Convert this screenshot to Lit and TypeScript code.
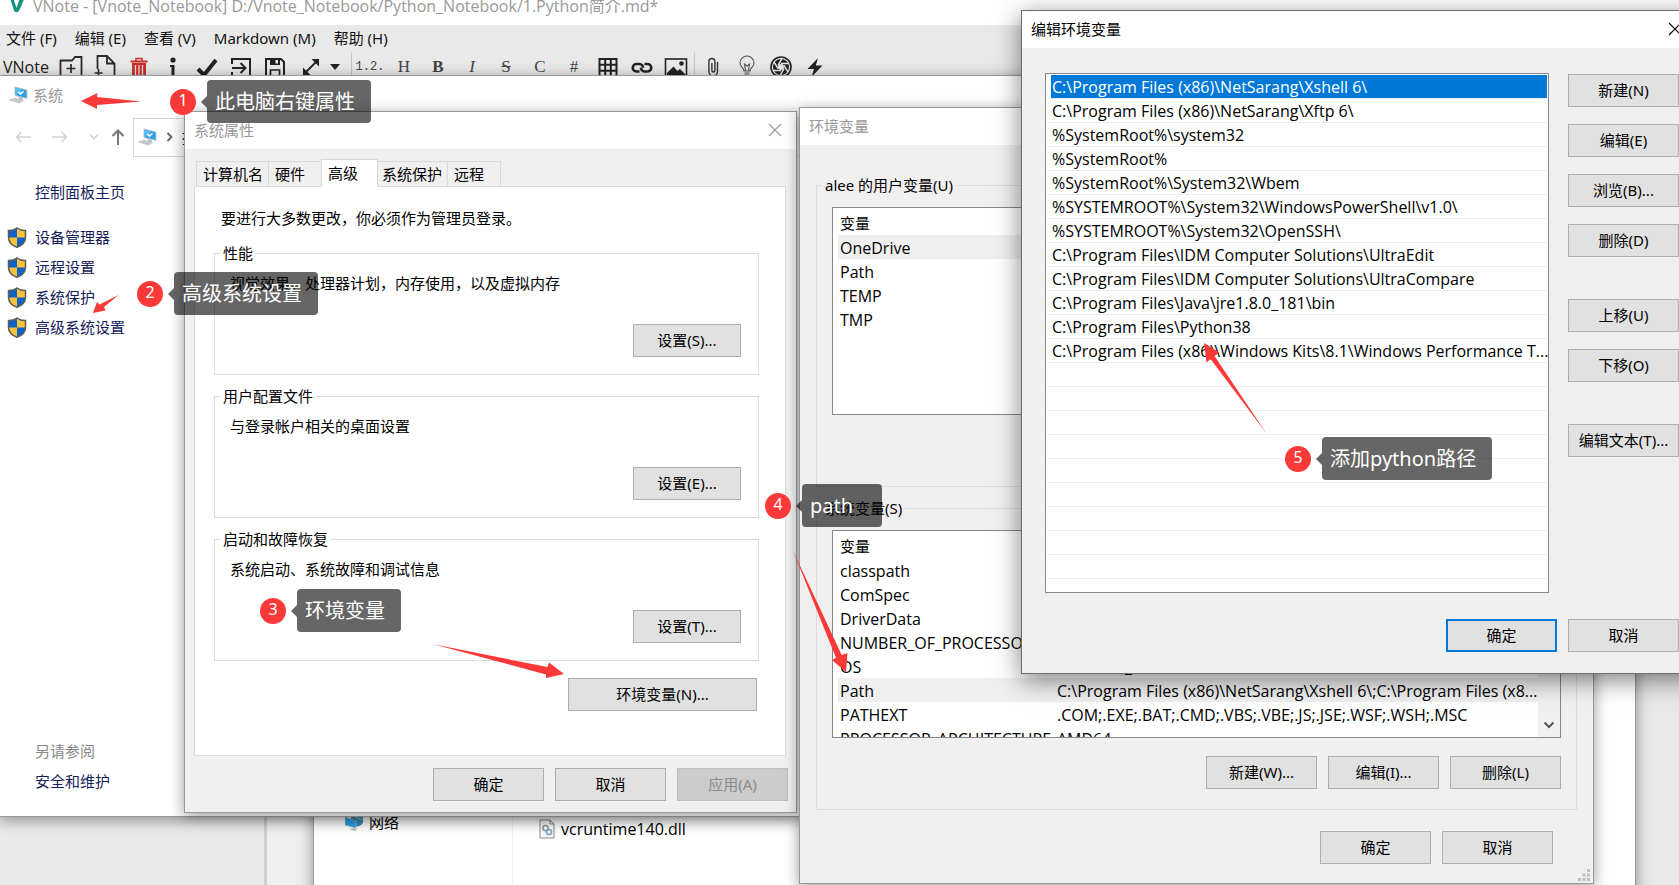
import { LitElement, html, css, svg } from "lit";
import { customElement } from "lit/decorators.js";
import { classMap } from "lit/directives/class-map.js";

const MENUS = ["文件 (F)", "编辑 (E)", "查看 (V)", "Markdown (M)", "帮助 (H)"];

const TABS = ["计算机名", "硬件", "高级", "系统保护", "远程"];

const GROUPS = [
  { title: "性能", text: "视觉效果，处理器计划，内存使用，以及虚拟内存", button: "设置(S)..." },
  { title: "用户配置文件", text: "与登录帐户相关的桌面设置", button: "设置(E)..." },
  { title: "启动和故障恢复", text: "系统启动、系统故障和调试信息", button: "设置(T)..." },
];

const USER_VARS: [string, string][] = [
  ["OneDrive", ""],
  ["Path", ""],
  ["TEMP", ""],
  ["TMP", ""],
];

const SYSTEM_VARS: [string, string][] = [
  ["classpath", ""],
  ["ComSpec", ""],
  ["DriverData", ""],
  ["NUMBER_OF_PROCESSORS", ""],
  ["OS", "Windows_NT"],
  ["Path", "C:\\Program Files (x86)\\NetSarang\\Xshell 6\\;C:\\Program Files (x8..."],
  ["PATHEXT", ".COM;.EXE;.BAT;.CMD;.VBS;.VBE;.JS;.JSE;.WSF;.WSH;.MSC"],
  ["PROCESSOR_ARCHITECTURE", "AMD64"],
];

const PATHS = [
  "C:\\Program Files (x86)\\NetSarang\\Xshell 6\\",
  "C:\\Program Files (x86)\\NetSarang\\Xftp 6\\",
  "%SystemRoot%\\system32",
  "%SystemRoot%",
  "%SystemRoot%\\System32\\Wbem",
  "%SYSTEMROOT%\\System32\\WindowsPowerShell\\v1.0\\",
  "%SYSTEMROOT%\\System32\\OpenSSH\\",
  "C:\\Program Files\\IDM Computer Solutions\\UltraEdit",
  "C:\\Program Files\\IDM Computer Solutions\\UltraCompare",
  "C:\\Program Files\\Java\\jre1.8.0_181\\bin",
  "C:\\Program Files\\Python38",
  "C:\\Program Files (x86)\\Windows Kits\\8.1\\Windows Performance T...",
];

const icon = (w: number, h: number, body: unknown) =>
  html`<svg width=${w} height=${h} viewBox="0 0 ${w} ${h}" aria-hidden="true">${body}</svg>`;

const computerIcon = icon(20, 18, svg`
  <path d="M6 1 L18 4 L18 12.500 L6 9.500Z" fill="#2b9fe8" stroke="#bfc7cd" stroke-width="1"/>
  <path d="M6.500 1.600 L12 3 L12 7 L6.500 9Z" fill="#58bdf5"/>
  <path d="M9.500 6 L11.500 8.300 L14.500 5.200" fill="none" stroke="#fff" stroke-width="1.400"/>
  <path d="M10 11 L14 12 L13.500 14 L9.500 13.500Z" fill="#b5bcc2"/>
  <path d="M0.500 14 L5 12 L14.500 14.500 L10.500 17Z" fill="#dde0e2" stroke="#aab0b4" stroke-width=".6"/>
  <path d="M3 14 L11 16 M5 13 L12.500 15" stroke="#a6abb0" stroke-width=".6"/>`);

const shieldIcon = icon(20, 21, svg`
  <path d="M10 1 C7.500 3 4.500 3.700 1.500 3.600 V10 C1.500 15 5 18.500 10 20.300 C15 18.500 18.500 15 18.500 10 V3.600 C15.500 3.700 12.500 3 10 1Z" fill="#ffc23b"/>
  <path d="M10 1 C7.500 3 4.500 3.700 1.500 3.600 V10.500 H10Z M10 10.500 H18.500 C18.300 15.200 15 18.500 10 20.300Z" fill="#0d62c8"/>
  <path d="M10 1 C7.500 3 4.500 3.700 1.500 3.600 V10 C1.500 15 5 18.500 10 20.300 C15 18.500 18.500 15 18.500 10 V3.600 C15.500 3.700 12.500 3 10 1Z" fill="none" stroke="#5c5c5c" stroke-width="1.500"/>`);

const closeIcon = icon(14, 14, svg`<path d="M1 1 L13 13 M13 1 L1 13" stroke="currentColor" stroke-width="1.100"/>`);

const TOOLS = [
  { label: "新建笔记本", icon: icon(24, 24, svg`<path d="M14 4.500 L16 2 H22.500 V22 H1.500 V5.500 H13Z" fill="none" stroke="#2b2b2b" stroke-width="1.800"/><path d="M12 9 V18 M7.500 13.500 H16.500" stroke="#2b2b2b" stroke-width="1.700"/>`) },
  { label: "新建笔记", icon: icon(24, 24, svg`<path d="M4.500 14 V1 H14 L21.500 8.500 V22 H13 M14 1 V8.500 H21.500" fill="none" stroke="#2b2b2b" stroke-width="1.800"/><path d="M5.500 14 V22 M1.500 18 H9.500" stroke="#2b2b2b" stroke-width="1.600"/>`) },
  { label: "删除", icon: icon(20, 24, svg`<path d="M3 8 H17 V22 H3Z" fill="#c9302c"/><path d="M1.500 6.500 H18.500" stroke="#c9302c" stroke-width="2"/><path d="M7 6 V3.500 H13 V6" fill="none" stroke="#c9302c" stroke-width="1.500"/><path d="M6.500 10 V21 M10 10 V21 M13.500 10 V21" stroke="#f0dede" stroke-width="1.300"/>`) },
  { label: "信息", icon: icon(12, 24, svg`<circle cx="6" cy="5" r="2.600" fill="#222"/><path d="M3 10 H7.500 V20 H9.500 V22 H2.500 V20 H4.500 V12 H3Z" fill="#222"/>`) },
  { label: "保存并退出", icon: icon(24, 24, svg`<path d="M3 14 L9 20 L21 5" fill="none" stroke="#222" stroke-width="4"/>`) },
  { label: "退出编辑", icon: icon(22, 24, svg`<path d="M2 9 V4 H20 V21 H2 V17" fill="none" stroke="#222" stroke-width="2"/><path d="M2 13 H15 M10.500 8 L15.500 13 L10.500 18" fill="none" stroke="#222" stroke-width="2"/>`) },
  { label: "保存", icon: icon(22, 24, svg`<path d="M2 4 H17 L20 7 V21.500 H2Z" fill="none" stroke="#222" stroke-width="2"/><path d="M6 4 H16 V10 H6Z" fill="#222"/><rect x="11.500" y="5" width="2.500" height="3.500" fill="#e9e9e9"/><path d="M6.500 22 V15 H15.500 V22" fill="none" stroke="#222" stroke-width="1.700"/>`) },
];

const FORMATS = [
  { cls: "seq", text: "1.2." },
  { cls: "", text: "H" },
  { cls: "bold", text: "B" },
  { cls: "italic", text: "I" },
  { cls: "strike", text: "S" },
  { cls: "", text: "C" },
  { cls: "", text: "#" },
];

const INSERTS = [
  { label: "表格", icon: icon(20, 22, svg`<path d="M1.500 3 H18.500 V20.500 H1.500Z M7.200 3 V20.500 M12.800 3 V20.500 M1.500 8.800 H18.500 M1.500 14.700 H18.500" fill="none" stroke="#222" stroke-width="2"/>`) },
  { label: "链接", icon: icon(22, 22, svg`<path d="M8.500 15.500 H5.500 A3.600 3.600 0 0 1 5.500 8 H8.500 A3.600 3.600 0 0 1 12 11.800 M13.500 8 H16.500 A3.600 3.600 0 0 1 16.500 15.500 H13.500 A3.600 3.600 0 0 1 10 11.800" fill="none" stroke="#222" stroke-width="2.600"/>`) },
  { label: "图片", icon: icon(24, 22, svg`<rect x="1.500" y="3" width="21" height="17.500" fill="none" stroke="#222" stroke-width="1.600"/><path d="M3 20 V17 L9.500 10.500 L13.500 15 L16 13 L21.500 18.500 V20Z" fill="#222"/><circle cx="17.500" cy="7.500" r="2.300" fill="#222"/>`) },
];

const EXTRAS = [
  { label: "附件", icon: icon(14, 22, svg`<path d="M11.500 6 V15.500 A4.300 4.300 0 0 1 2.900 15.500 V5.500 A3 3 0 0 1 8.900 5.500 V14.500 A1.500 1.500 0 0 1 5.900 14.500 V7" fill="none" stroke="#333" stroke-width="1.400"/>`) },
  { label: "提示", icon: icon(18, 24, svg`<path d="M6 16 C6 12.500 2 12 2 8 A7 7 0 0 1 16 8 C16 12 12 12.500 12 16Z M6.500 18 H11.500 M6.500 20 H11.500 M8 22 H10 M7.500 15.500 L6.500 9 L9 11 L11.500 9 L10.500 15.500" fill="none" stroke="#555" stroke-width="1.100"/>`) },
  { label: "截图", icon: icon(24, 24, svg`<circle cx="12" cy="12" r="10" fill="none" stroke="#222" stroke-width="1.600"/><circle cx="12" cy="12" r="5.500" fill="none" stroke="#222" stroke-width="5"/><path d="M12 8.500 L20 8.500 M15 10.300 L19 17.200 M15 13.700 L11 20.600 M12 15.500 L4 15.500 M9 13.700 L5 6.800 M9 10.300 L13 3.400" stroke="#e9e9e9" stroke-width="1.500"/>`) },
  { label: "快捷", icon: icon(18, 24, svg`<path d="M12 3 L1.500 14 H8 L5.500 22 L16.500 10.500 H9.800Z" fill="#222"/>`) },
];

@customElement("app-root")
export class AppRoot extends LitElement {
  static styles = css`
    :host {
      display: block;
      position: relative;
      height: 100vh;
      overflow: hidden;
      background: #e9e9e9;
      color: #000;
      font: 15px/20px "Noto Sans", "Noto Sans CJK SC", sans-serif;
    }
    * { box-sizing: border-box; }
    p, ul { margin: 0; padding: 0; }
    ul { list-style: none; }
    svg { display: block; flex: none; }
    a { text-decoration: none; color: #151c5a; }
    button { font: inherit; color: inherit; padding: 0; border: 0; background: none; white-space: nowrap; }
    .latin { font-family: "Open Sans", "Noto Sans CJK SC", sans-serif; font-size: 16px; }

    /* editor window at the back */
    .editor { height: 100%; display: flex; flex-direction: column; }
    .editor-title { height: 25px; background: #fff; color: #999; display: flex; gap: 8px; padding-left: 9px; align-items: flex-start; line-height: 13px; }
    .menubar { display: flex; gap: 18px; padding: 3px 6px; color: #111; }
    .toolbar { display: flex; align-items: center; height: 32px; color: #222; }
    .toolbar-name { width: 54px; padding-left: 3px; }
    .tool { width: 34px; height: 30px; display: flex; align-items: center; justify-content: center; font-family: "Liberation Serif", serif; font-size: 17px; color: #444; }
    .tool.wide { width: 58px; gap: 10px; }
    .tool.seq { font-family: "Liberation Mono", monospace; font-size: 12px; }
    .bold { font-weight: bold; }
    .italic { font-style: italic; }
    .strike { text-decoration: line-through; }
    .rule { width: 1px; height: 30px; margin: 0 1px; background: #c8c8c8; }
    .editor-body { flex: 1; display: flex; }
    .tree { width: 267px; border-right: 3px solid #cfcfcf; }
    .page { width: 48px; background: #efefef; }

    /* windows */
    .window { position: absolute; display: flex; flex-direction: column; border: 1px solid #999; background: #f0f0f0; box-shadow: 0 3px 14px rgba(0, 0, 0, .4); }
    .titlebar { flex: none; height: 37px; background: #fff; color: #999; display: flex; align-items: center; justify-content: space-between; padding: 0 14px 2px 9px; }
    .push { width: 111px; height: 33px; padding-bottom: 2px; border: 1px solid #adadad; background: #e1e1e1; }
    .push.setting { width: 108px; }
    .push.primary { border: 2px solid #0078d7; }
    .push.long { width: 189px; }
    .push:disabled { background: #ccc; border-color: #bfbfbf; color: #8a8a8a; }
    .actions { display: flex; justify-content: flex-end; gap: 11px; }
    fieldset { margin: 0; min-width: 0; border: 1px solid #dcdcdc; padding: 0 15px; }
    legend { margin-left: -10px; padding: 0 3px; }

    .explorer { left: 313px; top: 600px; width: 1323px; height: 340px; background: #fff; flex-direction: row; }
    .places { width: 199px; padding: 211px 0 0 31px; border-right: 1px solid #f0f0f0; }
    .files { padding: 218px 0 0 26px; }
    .entry { display: flex; gap: 6px; align-items: center; }

    .system { left: -1px; top: 75px; width: 1300px; height: 742px; background: #fff; }
    .system-title { display: flex; align-items: center; gap: 4px; height: 37px; padding-left: 9px; color: #999; }
    .navbar { display: flex; align-items: center; height: 48px; padding-left: 15px; color: #d3d3d3; }
    .nav { display: flex; }
    .nav.arrow { width: 37px; }
    .nav.more { width: 18px; }
    .nav.up { width: 26px; padding-left: 4px; color: #777; }
    .address { flex: 1; display: flex; align-items: center; gap: 8px; height: 39px; padding-left: 4px; border: 1px solid #d5d5d5; color: #000; }
    .side { flex: 1; display: flex; flex-direction: column; padding: 16px 0 20px 7px; }
    .side a, .side p { line-height: 30px; padding-left: 28px; }
    .side .task { display: flex; align-items: center; gap: 8px; padding-left: 0; }
    .tasks { padding-top: 15px; }
    .also { margin-top: auto; color: #888; display: flex; flex-direction: column; }

    .props { left: 184px; top: 111px; width: 613px; height: 702px; }
    .props-body { padding: 10px 8px 0 9px; display: flex; flex-direction: column; }
    .tabs { display: flex; align-items: flex-end; height: 28px; padding-left: 2px; }
    .tab { height: 26px; margin-right: -1px; padding: 0 16px 0 6px; border: 1px solid #d9d9d9; background: #f0f0f0; line-height: 24px; }
    .tab.full { padding-right: 5px; }
    .tab.active { z-index: 1; height: 28px; margin-right: -3px; padding-right: 19px; background: #fff; border-bottom-color: #fff; }
    .panel { margin: -1px 2px 12px 0; height: 570px; padding: 21px 26px 0 19px; background: #fff; border: 1px solid #dcdcdc; display: flex; flex-direction: column; gap: 11px; }
    .notice { padding: 0 0 4px 7px; }
    .panel fieldset { height: 132px; }
    .panel fieldset p { padding: 10px 0 31px; }
    .panel .actions { padding: 0 2px; }
    .after { margin-top: 6px; }

    .env { left: 799px; top: 107px; width: 795px; height: 777px; }
    .env-body { flex: 1; padding: 30px 16px 0; display: flex; flex-direction: column; gap: 11px; }
    .env-body fieldset { height: 312px; }
    .varlist { height: 208px; margin: 12px 0 18px; padding-left: 5px; border: 1px solid #828790; background: #fff; display: flex; overflow: hidden; }
    table { flex: 1; width: 0; align-self: flex-start; table-layout: fixed; border-collapse: collapse; }
    th, td { height: 24px; padding: 2px 2px 0; text-align: left; font-weight: 400; white-space: nowrap; }
    th { height: 27px; }
    .name { width: 217px; }
    .picked { background: #f0f0f0; }
    .scroll { width: 22px; background: #f0f0f0; display: flex; align-items: flex-end; justify-content: center; padding-bottom: 8px; color: #555; }
    .env-actions { padding: 10px 24px 0; }
    .grip { position: absolute; right: 3px; bottom: 2px; }

    .edit { left: 1021px; top: 10px; width: 682px; height: 664px; border-color: #6e6e6e; box-shadow: 0 6px 24px rgba(0, 0, 0, .5); }
    .edit .titlebar { color: #000; padding: 0 20px 2px 9px; }
    .edit-body { padding: 25px 23px 0; display: flex; flex-direction: column; gap: 26px; }
    .edit-main { display: flex; gap: 19px; }
    .paths { flex: 1; min-width: 0; height: 520px; padding: 1px; border: 1px solid #828790; background: repeating-linear-gradient(#fff 0 23px, #ededed 23px 24px) content-box, #fff; }
    .paths li { height: 24px; margin-left: 4px; padding-left: 1px; line-height: 25px; white-space: nowrap; border-bottom: 1px solid #ededed; }
    .paths .selected { background: #0078d7; color: #fff; }
    .column { display: flex; flex-direction: column; gap: 17px; padding-top: 1px; }
    .apart { margin-top: 25px; }

    /* step annotations lying over the windows */
    .arrows { position: absolute; left: 0; top: 0; pointer-events: none; }
    .step { position: absolute; display: flex; align-items: center; gap: 5px; height: 43px; color: #fff; }
    .badge { width: 26px; height: 26px; border-radius: 50%; background: #fb3938; text-align: center; font-size: 16px; line-height: 23px; }
    .tip { display: flex; align-items: center; }
    .tip::before { content: ""; border: solid transparent; border-width: 6px 6px 6px 0; border-right-color: rgba(0, 0, 0, .6); }
    .tip-text { height: 43px; min-width: 80px; padding: 0 16px 0 8px; border-radius: 4px; background: rgba(0, 0, 0, .6); font-size: 20px; line-height: 43px; white-space: nowrap; }
    .s1 { left: 170px; top: 80px; }
    .s2 { left: 137px; top: 272px; }
    .s3 { left: 260px; top: 589px; }
    .s4 { left: 765px; top: 484px; }
    .s5 { left: 1285px; top: 437px; }
  `;

  private toolButtons(items: { label: string; icon: unknown }[]) {
    return items.map((t) => html`<button class="tool" aria-label=${t.label}>${t.icon}</button>`);
  }

  private editor() {
    return html`
      <section class="editor">
        <div class="editor-title latin">
          ${icon(16, 14, svg`<path d="M1 -2 C3 -3 5 -1 5.500 2 L7.500 8 L11 -2 L15.500 -2 L11 9 C9.500 13 5.500 13.500 4.500 9Z" fill="#17917f"/>`)}
          <span>VNote - [Vnote_Notebook] D:/Vnote_Notebook/Python_Notebook/1.Python简介.md*</span>
        </div>
        <nav class="menubar">${MENUS.map((m) => html`<button>${m}</button>`)}</nav>
        <div class="toolbar">
          <span class="toolbar-name latin">VNote</span>
          ${this.toolButtons(TOOLS)}
          <button class="tool wide" aria-label="展开">
            ${icon(18, 18, svg`<path d="M3 15 L15 3" stroke="#222" stroke-width="1.800"/><path d="M9.500 1 H17 V8.500Z M1 9.500 V17 H8.500Z" fill="#222"/>`)}
            ${icon(10, 6, svg`<path d="M0 0 H10 L5 6Z" fill="#222"/>`)}
          </button>
          <span class="rule"></span>
          ${FORMATS.map((f) => html`<button class="tool ${f.cls}">${f.text}</button>`)}
          ${this.toolButtons(INSERTS)}
          <span class="rule"></span>
          ${this.toolButtons(EXTRAS)}
        </div>
        <div class="editor-body"><div class="tree"></div><div class="page"></div></div>
      </section>`;
  }

  private explorer() {
    return html`
      <section class="window explorer">
        <div class="places">
          <div class="entry">
            ${icon(18, 20, svg`<circle cx="12" cy="8" r="6.500" fill="#3a8fb5"/><path d="M8 4 C12 5 14 8 18 7" stroke="#a5d6e8" fill="none"/><path d="M0 5 L11 9 V16 L0 13Z" fill="#2aa4ee" stroke="#9fb4bf" stroke-width=".8"/><path d="M4 17 L9 19 L13 17.500 L8 16Z" fill="#bcc2c6"/>`)}
            <span>网络</span>
          </div>
        </div>
        <div class="files">
          <div class="entry">
            ${icon(16, 20, svg`<path d="M1 1 H11 L15 5 V19 H1Z" fill="#fafafa" stroke="#888"/><path d="M11 1 V5 H15" fill="none" stroke="#888"/><circle cx="6.500" cy="9" r="2.600" fill="none" stroke="#8b9298" stroke-width="1.500"/><circle cx="10" cy="13" r="2.600" fill="none" stroke="#6da4cc" stroke-width="1.500"/>`)}
            <span class="latin">vcruntime140.dll</span>
          </div>
        </div>
      </section>`;
  }

  private system() {
    return html`
      <section class="window system">
        <div class="system-title">${computerIcon}<span>系统</span></div>
        <div class="navbar">
          <button class="nav arrow" aria-label="后退">${icon(16, 12, svg`<path d="M16 6 H1.500 M6.500 1 L1.500 6 L6.500 11" fill="none" stroke="currentColor" stroke-width="1.600"/>`)}</button>
          <button class="nav arrow" aria-label="前进">${icon(16, 12, svg`<path d="M0 6 H14.500 M9.500 1 L14.500 6 L9.500 11" fill="none" stroke="currentColor" stroke-width="1.600"/>`)}</button>
          <button class="nav more" aria-label="最近">${icon(10, 8, svg`<path d="M1 1.500 L5 5.500 L9 1.500" fill="none" stroke="currentColor" stroke-width="1.600"/>`)}</button>
          <button class="nav up" aria-label="上移">${icon(14, 16, svg`<path d="M7 16 V1.500 M1.500 7 L7 1.500 L12.500 7" fill="none" stroke="currentColor" stroke-width="2"/>`)}</button>
          <div class="address">
            ${computerIcon}
            ${icon(8, 10, svg`<path d="M1.500 1 L5.500 5 L1.500 9" fill="none" stroke="#666" stroke-width="1.800"/>`)}
            <span>控制面板</span>
          </div>
        </div>
        <nav class="side">
          <a href="#">控制面板主页</a>
          <div class="tasks">
            ${["设备管理器", "远程设置", "系统保护", "高级系统设置"].map(
              (t) => html`<a class="task" href="#">${shieldIcon}<span>${t}</span></a>`
            )}
          </div>
          <div class="also"><p>另请参阅</p><a href="#">安全和维护</a></div>
        </nav>
      </section>`;
  }

  private props() {
    return html`
      <section class="window props" role="dialog" aria-label="系统属性">
        <div class="titlebar"><span>系统属性</span><button aria-label="关闭">${closeIcon}</button></div>
        <div class="props-body">
          <div class="tabs" role="tablist">
            ${TABS.map((t) => html`<button role="tab" class=${classMap({ tab: true, active: t === "高级", full: t.length > 2 })}>${t}</button>`)}
          </div>
          <div class="panel" role="tabpanel">
            <p class="notice">要进行大多数更改，你必须作为管理员登录。</p>
            ${GROUPS.map((g) => html`
              <fieldset>
                <legend>${g.title}</legend>
                <p>${g.text}</p>
                <div class="actions"><button class="push setting">${g.button}</button></div>
              </fieldset>`)}
            <div class="actions after"><button class="push long">环境变量(N)...</button></div>
          </div>
          <div class="actions">
            <button class="push">确定</button>
            <button class="push">取消</button>
            <button class="push" disabled>应用(A)</button>
          </div>
        </div>
      </section>`;
  }

  private varTable(rows: [string, string][], picked: string) {
    return html`
      <div class="varlist">
        <table>
          <thead><tr><th class="name">变量</th><th></th></tr></thead>
          <tbody class="latin">
            ${rows.map(([name, value]) => html`<tr class=${classMap({ picked: name === picked })}><td>${name}</td><td>${value}</td></tr>`)}
          </tbody>
        </table>
        <div class="scroll">${icon(12, 8, svg`<path d="M1.500 1.500 L6 6 L10.500 1.500" fill="none" stroke="currentColor" stroke-width="2"/>`)}</div>
      </div>`;
  }

  private env() {
    return html`
      <section class="window env" role="dialog" aria-label="环境变量">
        <div class="titlebar"><span>环境变量</span></div>
        <div class="env-body">
          <fieldset><legend>alee 的用户变量(U)</legend>${this.varTable(USER_VARS, "OneDrive")}</fieldset>
          <fieldset>
            <legend>系统变量(S)</legend>
            ${this.varTable(SYSTEM_VARS, "Path")}
            <div class="actions">
              <button class="push">新建(W)...</button>
              <button class="push">编辑(I)...</button>
              <button class="push">删除(L)</button>
            </div>
          </fieldset>
          <div class="actions env-actions">
            <button class="push">确定</button>
            <button class="push">取消</button>
          </div>
        </div>
        <div class="grip">${icon(12, 12, svg`<path d="M9 0h3v3h-3z M9 4.500h3v3h-3z M4.500 4.500h3v3h-3z M0 9h3v3h-3z M4.500 9h3v3h-3z M9 9h3v3h-3z" fill="#bfbfbf"/>`)}</div>
      </section>`;
  }

  private edit() {
    return html`
      <section class="window edit" role="dialog" aria-label="编辑环境变量">
        <div class="titlebar"><span>编辑环境变量</span><button aria-label="关闭">${closeIcon}</button></div>
        <div class="edit-body">
          <div class="edit-main">
            <ul class="paths latin" role="listbox" aria-label="路径">
              ${PATHS.map((p, i) => html`<li role="option" aria-selected=${i === 0} class=${classMap({ selected: i === 0 })}>${p}</li>`)}
            </ul>
            <div class="column">
              <button class="push">新建(N)</button>
              <button class="push">编辑(E)</button>
              <button class="push">浏览(B)...</button>
              <button class="push">删除(D)</button>
              <button class="push apart">上移(U)</button>
              <button class="push">下移(O)</button>
              <button class="push apart">编辑文本(T)...</button>
            </div>
          </div>
          <div class="actions">
            <button class="push primary">确定</button>
            <button class="push">取消</button>
          </div>
        </div>
      </section>`;
  }

  private steps() {
    const steps = ["此电脑右键属性", "高级系统设置", "环境变量", "path", "添加python路径"];
    return html`
      <svg class="arrows" width="1400" height="800" viewBox="0 0 1400 800" fill="#fb3938" aria-hidden="true">
        <path d="M81 101 L97.500 93 L97 97 L141 101.500 L97 105 L97 109Z"/>
        <path d="M93 313 L97 302 L99.500 304.500 L118.500 295 L104 307 L105.500 310.500Z"/>
        <path d="M433.500 644.300 L547.500 667 L549 662.500 L564 674 L546 678 L546 674.500Z"/>
        <path d="M792.300 549.300 L841.700 655 L847.500 653 L846 672 L832 660 L836 657.700Z"/>
        <path d="M1266.700 433.700 L1214.500 356 L1219.500 352.500 L1204 343 L1206.500 362.500 L1210.500 359Z"/>
      </svg>
      ${steps.map((t, i) => html`
        <div class="step s${i + 1}"><span class="badge">${i + 1}</span><span class="tip"><span class="tip-text">${t}</span></span></div>`)}`;
  }

  render() {
    return html`${this.editor()}${this.explorer()}${this.system()}${this.props()}${this.env()}${this.edit()}${this.steps()}`;
  }
}
